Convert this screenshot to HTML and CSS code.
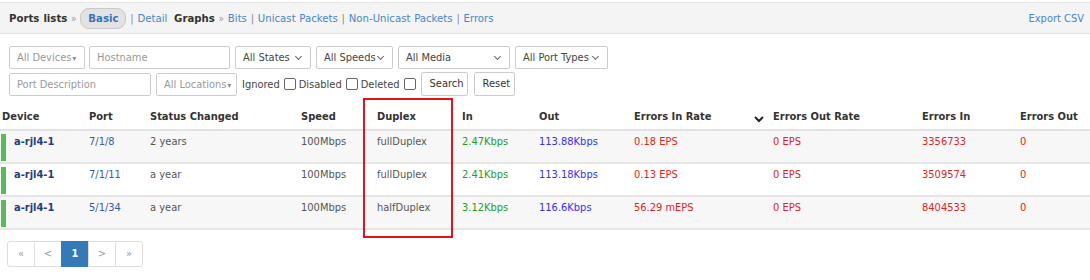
FILE: index.html
```html
<!DOCTYPE html>
<html lang="en">

<head>
    <meta charset="UTF-8">
    <title>Ports</title>
    <link rel="stylesheet" href="styles.css">
</head>

<body>

    <div class="navbar">
        <div class="nav-left">
            <b>Ports lists</b> <span class="raquo">&raquo;</span>
            <span class="pill">Basic</span>
            <span class="sep">|</span> <a href="#">Detail</a>
            <b class="graphs">Graphs</b> <span class="raquo">&raquo;</span>
            <a href="#">Bits</a> <span class="sep">|</span>
            <a href="#">Unicast Packets</a> <span class="sep">|</span>
            <a href="#">Non-Unicast Packets</a> <span class="sep">|</span>
            <a href="#">Errors</a>
        </div>
        <div class="nav-right">
            <a href="#">Export CSV</a>
        </div>
    </div>

    <div class="filters">
        <div class="filter-row">
            <div class="ctrl dd w-devices">All Devices<span class="caret">&#9662;</span></div>
            <div class="ctrl ph w-hostname">Hostname</div>
            <div class="ctrl sel w-states">All States<span class="chev"></span></div>
            <div class="ctrl sel w-speeds">All Speeds<span class="chev"></span></div>
            <div class="ctrl sel w-media">All Media<span class="chev"></span></div>
            <div class="ctrl sel w-types">All Port Types<span class="chev"></span></div>
        </div>
        <div class="filter-row">
            <div class="ctrl ph w-desc">Port Description</div>
            <div class="ctrl dd w-loc">All Locations<span class="caret">&#9662;</span></div>
            <label class="check">Ignored <span class="box"></span></label>
            <label class="check">Disabled <span class="box"></span></label>
            <label class="check">Deleted <span class="box"></span></label>
            <div class="btn btn-search">Search</div>
            <div class="btn btn-reset">Reset</div>
        </div>
    </div>

    <table class="ports">
        <colgroup>
            <col style="width:87px">
            <col style="width:61px">
            <col style="width:151px">
            <col style="width:76px">
            <col style="width:85px">
            <col style="width:77px">
            <col style="width:95px">
            <col style="width:139px">
            <col style="width:149px">
            <col style="width:98px">
            <col>
        </colgroup>
        <thead>
            <tr>
                <th>Device</th>
                <th>Port</th>
                <th>Status Changed</th>
                <th>Speed</th>
                <th>Duplex</th>
                <th>In</th>
                <th>Out</th>
                <th class="sorted">Errors In Rate<span class="sort-icon"><svg width="10" height="7" viewBox="0 0 10 7"><path d="M1 1 L5 5 L9 1" fill="none" stroke="#222" stroke-width="2"/></svg></span></th>
                <th>Errors Out Rate</th>
                <th>Errors In</th>
                <th>Errors Out</th>
            </tr>
        </thead>
        <tbody>
            <tr>
                <td class="device"><span class="status-up"></span><a href="#">a-rjl4-1</a></td>
                <td><a class="port" href="#">7/1/8</a></td>
                <td>2 years</td>
                <td>100Mbps</td>
                <td>fullDuplex</td>
                <td class="green">2.47Kbps</td>
                <td class="blue">113.88Kbps</td>
                <td class="red">0.18 EPS</td>
                <td class="red">0 EPS</td>
                <td class="red">3356733</td>
                <td class="red">0</td>
            </tr>
            <tr>
                <td class="device"><span class="status-up"></span><a href="#">a-rjl4-1</a></td>
                <td><a class="port" href="#">7/1/11</a></td>
                <td>a year</td>
                <td>100Mbps</td>
                <td>fullDuplex</td>
                <td class="green">2.41Kbps</td>
                <td class="blue">113.18Kbps</td>
                <td class="red">0.13 EPS</td>
                <td class="red">0 EPS</td>
                <td class="red">3509574</td>
                <td class="red">0</td>
            </tr>
            <tr>
                <td class="device"><span class="status-up"></span><a href="#">a-rjl4-1</a></td>
                <td><a class="port" href="#">5/1/34</a></td>
                <td>a year</td>
                <td>100Mbps</td>
                <td>halfDuplex</td>
                <td class="green">3.12Kbps</td>
                <td class="blue">116.6Kbps</td>
                <td class="red">56.29 mEPS</td>
                <td class="red">0 EPS</td>
                <td class="red">8404533</td>
                <td class="red">0</td>
            </tr>
        </tbody>
    </table>

    <ul class="pagination">
        <li>&laquo;</li>
        <li>&lt;</li>
        <li class="active">1</li>
        <li>&gt;</li>
        <li>&raquo;</li>
    </ul>

    <div class="highlight"></div>

</body>

</html>
```

FILE: styles.css
```css
body {
    margin: 0;
    padding-top: 2px;
    font-family: "DejaVu Sans Condensed", "DejaVu Sans", Verdana, sans-serif;
    font-stretch: semi-condensed;
    font-size: 11px;
    color: #555;
    background: #fff;
    position: relative;
    overflow: hidden;
}

a {
    color: #4a86c5;
    text-decoration: none;
}

.navbar {
    display: flex;
    justify-content: space-between;
    align-items: center;
    height: 30px;
    background: #f4f4f4;
    border-top: 1px solid #e9e9e9;
    border-bottom: 1px solid #e4e4e4;
    padding: 0 6px 0 9px;
}

.nav-left {
    font-size: 11.3px;
    word-spacing: 0.5px;
}

.nav-left b {
    color: #333;
}

.nav-left .graphs {
    margin-left: 3px;
}

.raquo {
    color: #999;
    font-size: 10px;
}

.sep {
    color: #888;
}

.pill {
    display: inline-block;
    padding: 3px 7px;
    border: 1px solid #c8c8c8;
    border-radius: 9px;
    background: #e2e2e2;
    color: #3574b8;
    font-weight: bold;
}

.filters {
    padding: 12px 0 0 9px;
}

.filter-row {
    display: flex;
    align-items: center;
    gap: 5px;
    margin-bottom: 3px;
}

.ctrl {
    box-sizing: border-box;
    height: 23px;
    line-height: 21px;
    border: 1px solid #ccc;
    border-radius: 2px;
    padding: 0 7px;
    background: #fff;
    position: relative;
    white-space: nowrap;
}

.ph,
.dd {
    color: #999;
}

.sel {
    color: #444;
    padding-left: 7px;
}

.caret {
    font-size: 8px;
    margin-left: 1px;
    color: #888;
}

.chev {
    position: absolute;
    right: 9px;
    top: 7px;
    width: 4px;
    height: 4px;
    border-right: 1px solid #666;
    border-bottom: 1px solid #666;
    transform: rotate(45deg);
}

.w-devices { width: 76px; margin-right: -1px; }
.w-hostname { width: 141px; }
.w-states { width: 76px; }
.w-speeds { width: 77px; }
.w-media { width: 112px; }
.w-types { width: 93px; }
.w-desc { width: 142px; }
.w-loc { width: 81px; }

.check {
    display: flex;
    align-items: center;
    gap: 4px;
    color: #444;
    margin-right: -2px;
}

.box {
    width: 10px;
    height: 10px;
    border: 1px solid #666;
    border-radius: 2px;
    background: #fff;
}

.btn {
    box-sizing: border-box;
    height: 24px;
    line-height: 22px;
    border: 1px solid #ccc;
    border-radius: 2px;
    padding: 0 8px;
    color: #333;
    background: #fff;
}

.btn-search {
    margin-left: 2px;
    width: 47px;
}

.btn-reset {
    width: 41px;
    margin-left: 1px;
}

.ports {
    border-collapse: collapse;
    table-layout: fixed;
    width: 100%;
    margin-top: 6px;
}

.ports th {
    text-align: left;
    color: #333;
    font-weight: bold;
    padding: 8px 2px 6px 2px;
    border-bottom: 2px solid #e2e2e2;
    white-space: nowrap;
}

.ports th.sorted {
    position: relative;
}

.sort-icon {
    position: absolute;
    right: 7px;
    top: 11px;
}

.ports td {
    padding: 4px 2px 14px 2px;
    border-bottom: 2px solid #e6e6e6;
    vertical-align: top;
    white-space: nowrap;
}

.ports tbody tr:nth-child(odd) {
    background: #f7f7f7;
}

.ports td.device {
    position: relative;
    padding-left: 14px;
}

.status-up {
    position: absolute;
    left: 1px;
    top: 3px;
    bottom: 1px;
    width: 5px;
    background: #5cb85c;
}

.device a {
    color: #1f3f7a;
    font-weight: bold;
}

a.port {
    color: #3a5ba0;
}

.green { color: #2a9a2a; }
.blue { color: #3333ee; }
.red { color: #e02424; }

.pagination {
    display: flex;
    list-style: none;
    margin: 11px 0 0 8px;
    padding: 0;
}

.pagination li {
    box-sizing: border-box;
    width: 28px;
    height: 26px;
    line-height: 24px;
    text-align: center;
    border: 1px solid #ddd;
    margin-left: -1px;
    color: #999;
    background: #fff;
}

.pagination li:first-child {
    border-radius: 3px 0 0 3px;
}

.pagination li:last-child {
    border-radius: 0 3px 3px 0;
}

.pagination li.active {
    background: #337ab7;
    border-color: #337ab7;
    color: #fff;
    font-weight: bold;
}

.highlight {
    position: absolute;
    left: 363px;
    top: 98px;
    width: 86px;
    height: 136px;
    border: 2px solid #e3131b;
}
```
